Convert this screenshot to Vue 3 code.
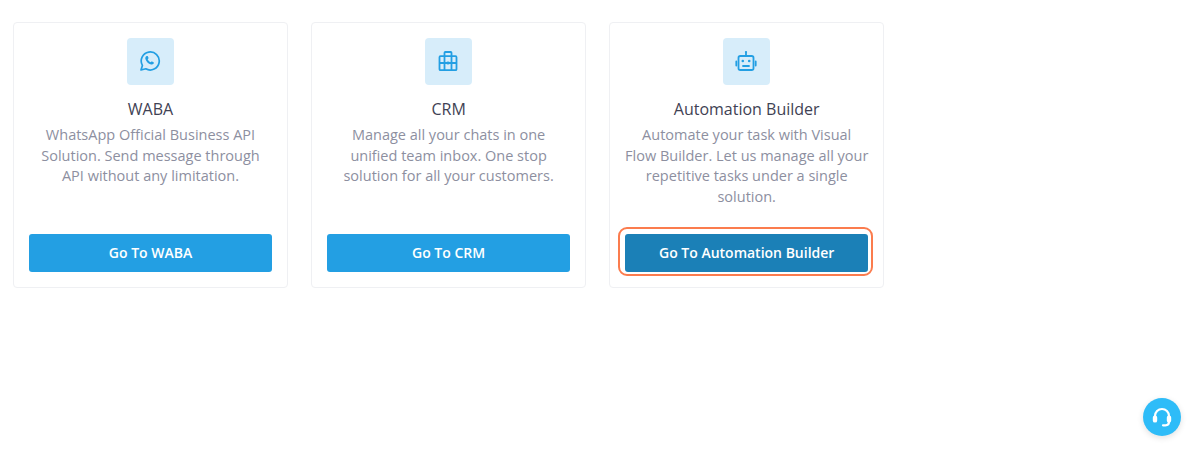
<script setup>
const cards = [
  { id: 'waba', title: 'WABA', lines: ['WhatsApp Official Business API', 'Solution. Send message through', 'API without any limitation.'], btn: 'Go To WABA' },
  { id: 'crm', title: 'CRM', lines: ['Manage all your chats in one', 'unified team inbox. One stop', 'solution for all your customers.'], btn: 'Go To CRM' },
  { id: 'bot', title: 'Automation Builder', lines: ['Automate your task with Visual', 'Flow Builder. Let us manage all your', 'repetitive tasks under a single', 'solution.'], btn: 'Go To Automation Builder', active: true },
]
</script>

<template>
  <div class="page">
    <div class="cards">
      <div v-for="c in cards" :key="c.id" class="card">
        <div class="icon">
          <svg v-if="c.id === 'waba'" class="glyph" width="22" height="22" viewBox="0 0 22 22" fill="none" stroke="#239fe3" stroke-width="1.700" stroke-linecap="round" stroke-linejoin="round">
            <path d="M2 20 3.400 15.400A9 9 0 1 1 6.800 18.800Z" />
            <path d="M7.300 6.300c.5-.5 1.200-.6 1.500 0l.7 1.500c.1.400 0 .7-.3 1l-.5.5c.6 1.300 1.600 2.300 2.900 2.900l.5-.5c.3-.3.7-.4 1-.2l1.400.7c.5.300.5 1 0 1.500-.6.700-1.500 1-2.400.7-3-.9-4.900-2.800-5.700-5.500-.2-.9 0-1.900.9-2.600Z" fill="#239fe3" stroke="none" />
          </svg>
          <svg v-else-if="c.id === 'crm'" class="glyph" width="22" height="22" viewBox="0 0 22 22" fill="none" stroke="#239fe3" stroke-width="1.800" stroke-linejoin="round">
            <rect x="2.500" y="6.200" width="17" height="14" rx="1" />
            <path d="M7.500 6V2.800c0-.5.300-.8.800-.8h5.400c.5 0 .8.300.8.800V6" />
            <path d="M7.500 6.500V20M14.500 6.500V20M2.500 13h17" />
            <rect x="9.800" y="11.600" width="2.400" height="2.800" fill="#239fe3" stroke="none" />
          </svg>
          <svg v-else class="glyph" width="22" height="22" viewBox="0 0 22 22" fill="none" stroke="#239fe3" stroke-width="1.800" stroke-linecap="round" stroke-linejoin="round">
            <rect x="3.500" y="6" width="15" height="14" rx="1.800" />
            <path d="M11 2.500V6M1.300 11.500v4M20.700 11.500v4M8 16h6" />
            <circle cx="11" cy="2" r="1.100" fill="#239fe3" stroke="none" />
            <circle cx="7.800" cy="11" r="1.300" fill="#239fe3" stroke="none" />
            <circle cx="14.200" cy="11" r="1.300" fill="#239fe3" stroke="none" />
          </svg>
        </div>
        <h3 class="title">{{ c.title }}</h3>
        <p class="desc"><span v-for="l in c.lines" :key="l" class="line">{{ l }}</span></p>
        <button class="btn" :class="{ active: c.active }">{{ c.btn }}<span v-if="c.active" class="ring"></span></button>
      </div>
    </div>
    <div class="help">
      <svg width="22" height="22" viewBox="0 0 22 22" fill="none" stroke="#fff" stroke-width="2.200" stroke-linecap="round">
        <path d="M4 12.500V10a7 7 0 0 1 14 0v2.500" />
        <rect x="2.900" y="10.500" width="2.200" height="5" rx="1.100" fill="#fff" />
        <rect x="16.900" y="10.500" width="2.200" height="5" rx="1.100" fill="#fff" />
        <path d="M18 15.500c0 2.300-1.500 3.800-3.500 3.800H12" />
      </svg>
    </div>
  </div>
</template>

<style scoped>
.page {
  position: relative;
  width: 1200px;
  height: 475px;
  overflow: hidden;
  background: #fff;
  font-family: "Open Sans", "Noto Sans", sans-serif;
  padding: 22px 0 0 13.250px;
  box-sizing: border-box;
}
.cards {
  display: flex;
  gap: 23.600px;
}
.card {
  width: 274.500px;
  height: 266px;
  box-sizing: border-box;
  border: 1px solid #eff0f3;
  border-radius: 4px;
  padding: 15px;
  display: flex;
  flex-direction: column;
  align-items: center;
}
.icon {
  width: 46.500px;
  height: 46.500px;
  flex: none;
  border-radius: 4px;
  background: #d7edfa;
  display: flex;
  align-items: center;
  justify-content: center;
}
.glyph {
  margin-right: 1px;
}
.title {
  margin: 13.500px 0 0;
  font-size: 16px;
  line-height: 22px;
  font-weight: 500;
  color: #3f4254;
  text-align: center;
}
.desc {
  margin: 5px 0 0;
  font-size: 14.500px;
  line-height: 20.500px;
  color: #8d8f9f;
  text-align: center;
  white-space: nowrap;
}
.line {
  display: block;
}
.btn {
  position: relative;
  margin-top: auto;
  width: 100%;
  height: 38px;
  flex: none;
  border: 0;
  border-radius: 3px;
  padding: 0 0 2px;
  background: #239fe3;
  color: #fff;
  font-family: inherit;
  font-size: 14px;
  font-weight: 600;
}
.btn.active {
  background: #1b80b7;
}
.ring {
  position: absolute;
  left: -7px;
  right: -5px;
  top: -7.500px;
  bottom: -3.500px;
  border: 2.500px solid #fb7c4e;
  border-radius: 9px;
}
.help {
  position: absolute;
  left: 1142.500px;
  top: 398px;
  width: 38px;
  height: 38px;
  border-radius: 50%;
  background: #2ebcf8;
  box-shadow: 0 2px 6px rgba(0, 0, 0, 0.12);
  display: flex;
  align-items: center;
  justify-content: center;
}
</style>
